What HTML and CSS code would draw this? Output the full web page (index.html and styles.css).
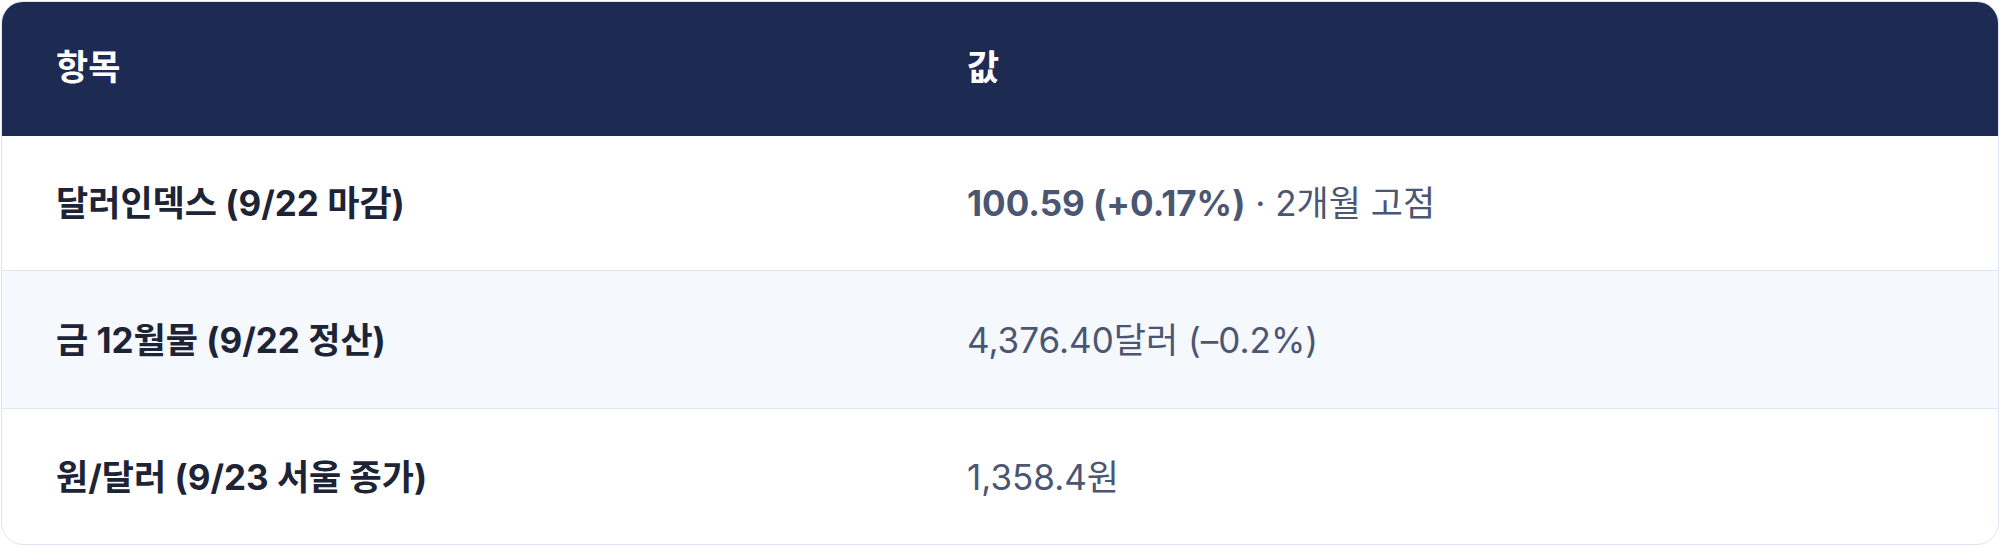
FILE: index.html
```html
<!DOCTYPE html>
<html lang="ko">
<head>
<meta charset="utf-8">
<link rel="stylesheet" href="styles.css">
</head>
<body>
<div class="card">
  <div class="row head">
    <div class="cell">항목</div>
    <div class="cell">값</div>
  </div>
  <div class="row r1">
    <div class="cell label">달러인덱스 (9/22 마감)</div>
    <div class="cell value"><strong>100.59 (+0.17%)</strong> · 2개월 고점</div>
  </div>
  <div class="row r2 alt">
    <div class="cell label">금 12월물 (9/22 정산)</div>
    <div class="cell value">4,376.40달러 (–0.2%)</div>
  </div>
  <div class="row r3">
    <div class="cell label">원/달러 (9/23 서울 종가)</div>
    <div class="cell value">1,358.4원</div>
  </div>
</div>
</body>
</html>
```

FILE: styles.css
```css
* { box-sizing: border-box; }
html, body { margin: 0; padding: 0; background: #ffffff; }
body {
  padding: 1px;
  font-family: Inter, "Noto Sans CJK KR", sans-serif;
}
.card {
  width: 1998px;
  height: 544px;
  border: 1px solid #dde3f0;
  border-radius: 22px;
  overflow: hidden;
  background: #ffffff;
  display: flex;
  flex-direction: column;
}
.row {
  display: grid;
  grid-template-columns: 911px 1fr;
  align-items: center;
  border-bottom: 1px solid #e0e6f3;
}
.row:last-child { border-bottom: none; }
.cell { padding: 0 54px; line-height: 1.2; }
.head {
  background: #1d2b53;
  color: #ffffff;
  font-weight: 700;
  font-size: 35px;
  height: 134px;
  border-bottom: none;
}
.head .cell { padding-bottom: 4px; }
.r1 { height: 135px; }
.r2 { height: 138px; }
.r3 { flex: 1; }
.alt { background: #f5f8fd; }
.label {
  font-size: 35px;
  font-weight: 700;
  color: #1c2436;
}
.value {
  font-size: 35px;
  color: #4a5672;
}
.value strong { font-weight: 700; }
```
